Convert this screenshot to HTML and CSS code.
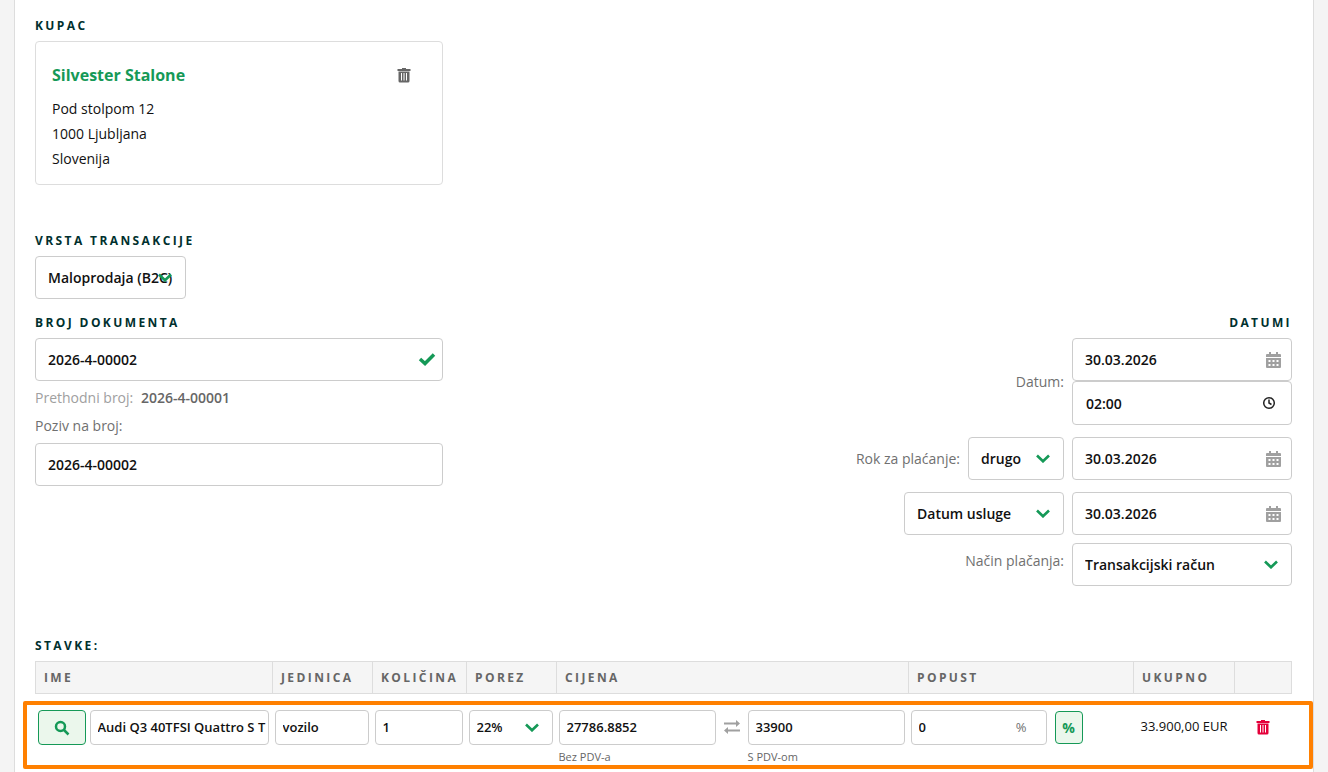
FILE: index.html
```html
<!DOCTYPE html>
<html lang="hr">
<head>
    <meta charset="UTF-8">
    <meta name="viewport" content="width=device-width, initial-scale=1.0">
    <title>Račun</title>
    <link rel="stylesheet" href="styles.css">
</head>
<body>
    <!-- Shared icons -->
    <svg class="sprite" aria-hidden="true">
        <symbol id="icon-trash" viewBox="0 0 14 15">
            <path fill-rule="evenodd" d="M5 0h4v1h4.500v2H.5V1H5zM1.500 3.500h11V13a1.500 1.500 0 0 1-1.500 1.500H3A1.500 1.500 0 0 1 1.500 13zM4 5v7.500h1V5zm2.500 0v7.500h1V5zM9 5v7.500h1V5z"/>
        </symbol>
        <symbol id="icon-chevron" viewBox="0 0 14 9">
            <path d="M1 1.500L7 7.300 13 1.500" fill="none" stroke="currentColor" stroke-width="2.600"/>
        </symbol>
        <symbol id="icon-calendar" viewBox="0 0 15 16">
            <path fill-rule="evenodd" d="M3 0h2v2h5V0h2v2h2a1 1 0 0 1 1 1v2H0V3a1 1 0 0 1 1-1h2zM0 6h15v9a1 1 0 0 1-1 1H1a1 1 0 0 1-1-1zM2.500 8v2h2V8zm4 0v2h2V8zm4 0v2h2V8zM2.500 12v2h2v-2zm4 0v2h2v-2zm4 0v2h2v-2z"/>
        </symbol>
    </svg>

    <main class="page">
        <h2>Kupac</h2>
        <div class="customer-card">
            <div class="customer-head">
                <a href="#" class="customer-name">Silvester Stalone</a>
                <button type="button" class="icon-btn" aria-label="Ukloni kupca"><svg width="14" height="15"><use href="#icon-trash"/></svg></button>
            </div>
            <address>
                Pod stolpom 12<br>
                1000 Ljubljana<br>
                Slovenija
            </address>
        </div>

        <h2><label for="transaction-type">Vrsta transakcije</label></h2>
        <div class="select select-type">
            <select id="transaction-type">
                <option>Maloprodaja (B2C)</option>
            </select>
            <svg class="chevron"><use href="#icon-chevron"/></svg>
        </div>

        <div class="document">
            <section class="document-number">
                <h2><label for="doc-number">Broj dokumenta</label></h2>
                <div class="field">
                    <input type="text" id="doc-number" value="2026-4-00002">
                    <svg class="check" viewBox="0 0 18 14"><path d="M2 6l5 4.500L16 1.500" fill="none" stroke="currentColor" stroke-width="3.500"/></svg>
                </div>
                <p class="previous">Prethodni broj: <strong>2026-4-00001</strong></p>
                <label class="reference-label" for="reference">Poziv na broj:</label>
                <input type="text" id="reference" value="2026-4-00002">
            </section>

            <section class="dates">
                <h2>Datumi</h2>
                <div class="date-row">
                    <label for="date">Datum:</label>
                    <div class="date-col">
                        <div class="field">
                            <input type="text" id="date" value="30.03.2026">
                            <svg class="calendar"><use href="#icon-calendar"/></svg>
                        </div>
                        <div class="field">
                            <input type="text" class="time" aria-label="Vrijeme" value="02:00">
                            <svg class="clock" viewBox="0 0 14 14"><circle cx="7" cy="7" r="5.300"/><path d="M7 3.500V7l2.500 1.500"/></svg>
                        </div>
                    </div>
                </div>
                <div class="date-row">
                    <label for="due">Rok za plaćanje:</label>
                    <div class="select select-due">
                        <select id="due">
                            <option>drugo</option>
                        </select>
                        <svg class="chevron"><use href="#icon-chevron"/></svg>
                    </div>
                    <div class="date-col field">
                        <input type="text" aria-label="Datum dospijeća" value="30.03.2026">
                        <svg class="calendar"><use href="#icon-calendar"/></svg>
                    </div>
                </div>
                <div class="date-row">
                    <div class="select select-service">
                        <select aria-label="Vrsta datuma">
                            <option>Datum usluge</option>
                        </select>
                        <svg class="chevron"><use href="#icon-chevron"/></svg>
                    </div>
                    <div class="date-col field">
                        <input type="text" aria-label="Datum usluge" value="30.03.2026">
                        <svg class="calendar"><use href="#icon-calendar"/></svg>
                    </div>
                </div>
                <div class="date-row payment-row">
                    <label for="payment">Način plačanja:</label>
                    <div class="date-col select">
                        <select id="payment">
                            <option>Transakcijski račun</option>
                        </select>
                        <svg class="chevron"><use href="#icon-chevron"/></svg>
                    </div>
                </div>
            </section>
        </div>

        <h2>Stavke:</h2>
        <div class="items-wrap">
            <table class="items">
                <colgroup>
                    <col>
                    <col class="col-unit">
                    <col class="col-qty">
                    <col class="col-tax">
                    <col class="col-price">
                    <col class="col-discount">
                    <col class="col-total">
                    <col class="col-remove">
                </colgroup>
                <thead>
                    <tr>
                        <th>Ime</th>
                        <th>Jedinica</th>
                        <th>Količina</th>
                        <th>Porez</th>
                        <th>Cijena</th>
                        <th>Popust</th>
                        <th>Ukupno</th>
                        <th></th>
                    </tr>
                </thead>
                <tbody>
                    <tr>
                        <td>
                            <div class="cell">
                                <button type="button" class="search-btn" aria-label="Traži">
                                    <svg width="16" height="16" viewBox="0 0 16 16"><circle cx="6.500" cy="6.500" r="4.500"/><path d="M10 10l4.500 4.500"/></svg>
                                </button>
                                <input type="text" aria-label="Ime" value="Audi Q3 40TFSI Quattro S T">
                            </div>
                        </td>
                        <td><input type="text" aria-label="Jedinica" value="vozilo"></td>
                        <td><input type="text" aria-label="Količina" value="1"></td>
                        <td>
                            <div class="select">
                                <select aria-label="Porez">
                                    <option>22%</option>
                                </select>
                                <svg class="chevron"><use href="#icon-chevron"/></svg>
                            </div>
                        </td>
                        <td>
                            <div class="cell prices">
                                <div class="price">
                                    <input type="text" id="net" value="27786.8852">
                                    <label for="net">Bez PDV-a</label>
                                </div>
                                <svg class="swap" viewBox="0 0 16 14"><path d="M0 2.500h12V0l4 3.500L12 7V4.500H0zM16 11.500H4V14l-4-3.500L4 7v2.500h12z"/></svg>
                                <div class="price">
                                    <input type="text" id="gross" value="33900">
                                    <label for="gross">S PDV-om</label>
                                </div>
                            </div>
                        </td>
                        <td>
                            <div class="cell discount">
                                <div class="field">
                                    <input type="text" aria-label="Popust" value="0">
                                    <span class="unit">%</span>
                                </div>
                                <button type="button" class="percent-btn">%</button>
                            </div>
                        </td>
                        <td class="total">33.900,00 EUR</td>
                        <td class="remove"><button type="button" class="icon-btn danger" aria-label="Obriši stavku"><svg width="14" height="15"><use href="#icon-trash"/></svg></button></td>
                    </tr>
                </tbody>
            </table>
            <div class="highlight"></div>
        </div>
    </main>
</body>
</html>
```
FILE: styles.css
```css
* {
    box-sizing: border-box;
}

body {
    margin: 0;
    background-color: #f4f4f4;
    color: #111;
    font-family: "Open Sans", sans-serif;
    font-size: 14px;
    line-height: 20px;
    overflow: hidden;
}

.sprite {
    display: none;
}

.page {
    min-height: 100vh;
    margin: 0 14px;
    padding: 16px 21px 0 20px;
    background: #fff;
    border: 1px solid #ddd;
    border-width: 0 1px;
}

h2 {
    margin: 0 0 5px;
    color: #00302e;
    font-size: 12px;
    font-weight: 700;
    line-height: 20px;
    letter-spacing: 0.2em;
    text-transform: uppercase;
}

input, select {
    display: block;
    width: 100%;
    height: 43px;
    padding: 0 12px;
    border: 1px solid #ccc;
    border-radius: 4px;
    background: #fff;
    color: #111;
    font: 600 14px "Open Sans", sans-serif;
}

select {
    appearance: none;
}

button {
    padding: 0;
    font-family: inherit;
    cursor: pointer;
}

svg {
    display: block;
    fill: currentColor;
}

/* Fields with an icon inside */
.field, .select {
    position: relative;
}

.field svg, .chevron, .unit {
    position: absolute;
    top: 0;
    bottom: 0;
    margin: auto 0;
    pointer-events: none;
}

.chevron {
    right: 14px;
    width: 14px;
    height: 9px;
    color: #159957;
}

.field .check {
    right: 7px;
    width: 18px;
    height: 14px;
    color: #159957;
}

.field .calendar {
    right: 11px;
    width: 15px;
    height: 16px;
    color: #a0a0a0;
}

.field .clock {
    right: 16px;
    width: 14px;
    height: 14px;
    fill: none;
    stroke: #222;
    stroke-width: 1.5;
}

/* Customer */
.customer-card {
    width: 408px;
    height: 144px;
    margin-bottom: 46px;
    padding: 20px 31px 0 16px;
    border: 1px solid #ddd;
    border-radius: 4px;
}

.customer-head {
    display: flex;
    align-items: center;
    justify-content: space-between;
    height: 26px;
    margin-bottom: 8px;
}

.customer-name {
    color: #159957;
    font-size: 16px;
    font-weight: 700;
    text-decoration: none;
}

address {
    font-style: normal;
    line-height: 25px;
}

.icon-btn {
    border: 0;
    background: none;
    color: #666;
}

.icon-btn.danger {
    color: #e4003a;
}

.select-type {
    width: 151px;
    margin-bottom: 14px;
}

.select-type select {
    padding-right: 0;
}

/* Document number and dates */
.document {
    display: grid;
    grid-template-columns: 408px 1fr;
    margin-bottom: 50px;
}

.previous {
    margin: 7px 0 8px;
    color: #a0a0a0;
}

.previous strong {
    margin-left: 4px;
    color: #666;
    font-weight: 600;
}

.reference-label {
    display: block;
    margin-bottom: 7px;
    color: #707070;
}

.dates h2 {
    text-align: right;
}

.date-row {
    display: flex;
    align-items: center;
    justify-content: flex-end;
    gap: 8px;
    margin-bottom: 12px;
    color: #707070;
}

.date-col {
    width: 220px;
}

.date-col .time {
    height: 44px;
    padding-left: 13px;
}

.select-due {
    width: 96px;
}

.select-service {
    width: 160px;
}

.payment-row {
    align-items: flex-start;
    margin: -4px 0 0;
}

.payment-row label {
    padding-top: 8px;
}

/* Items */
.items-wrap {
    position: relative;
}

.items {
    width: 100%;
    table-layout: fixed;
    border-collapse: collapse;
}

.col-unit {
    width: 100px;
}

.col-qty {
    width: 94px;
}

.col-tax {
    width: 90px;
}

.col-price {
    width: 352px;
}

.col-discount {
    width: 225px;
}

.col-total {
    width: 101px;
}

.col-remove {
    width: 57px;
}

th {
    height: 32px;
    padding: 0 8px;
    border: 1px solid #ddd;
    background-color: #f5f5f5;
    color: #666;
    font-size: 12px;
    letter-spacing: 0.2em;
    text-align: left;
    text-transform: uppercase;
}

td {
    padding: 16px 4px 0 2px;
    font-size: 13px;
    vertical-align: top;
}

.items input, .items select {
    height: 35px;
    padding: 0 2px 2px 7px;
    font-size: 13px;
}

.cell {
    display: flex;
    gap: 4px;
}

.cell input {
    min-width: 0;
}

.prices {
    gap: 8px;
}

.price {
    flex: 1;
}

.price label {
    display: block;
    margin-top: 2px;
    color: #666;
    font-size: 11px;
}

.swap {
    flex: none;
    width: 16px;
    height: 14px;
    margin-top: 10px;
    color: #a0a0a0;
}

.search-btn, .percent-btn {
    flex: none;
    border: 1px solid #159957;
    border-radius: 4px;
    background-color: #ebf7ec;
    color: #159957;
}

.search-btn {
    display: flex;
    align-items: center;
    justify-content: center;
    width: 48px;
    height: 35px;
}

.search-btn svg {
    fill: none;
    stroke: currentColor;
    stroke-width: 2.5;
}

.discount {
    align-items: center;
    gap: 8px;
}

.discount .field {
    width: 136px;
}

.unit {
    right: 20px;
    height: 22px;
    color: #707070;
}

.percent-btn {
    width: 28px;
    height: 33px;
    font-size: 14px;
    font-weight: 700;
}

.total {
    padding: 22px 0 0 7px;
    font-weight: 500;
    white-space: nowrap;
}

.remove {
    padding: 26px 3px 0;
}

.remove .icon-btn {
    display: block;
    margin: 0 auto;
}

.highlight {
    position: absolute;
    top: 40px;
    right: -21px;
    left: -12px;
    height: 68px;
    border: 4px solid #ff8000;
    border-radius: 2px;
    pointer-events: none;
}
```
